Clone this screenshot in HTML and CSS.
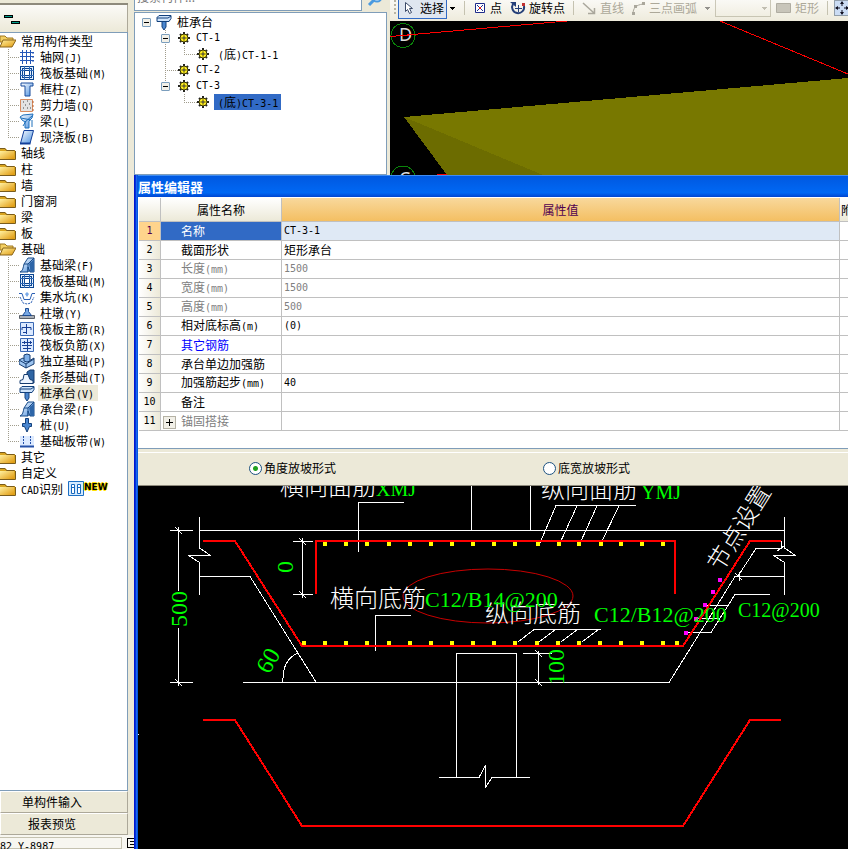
FILE: index.html
```html
<!DOCTYPE html>
<html lang="zh-CN">
<head>
    <meta charset="utf-8">
    <title>属性编辑器</title>
    <link rel="stylesheet" href="styles.css">
</head>
<body>
    <!-- shared icons -->
    <svg class="defs" aria-hidden="true">
        <defs>
            <linearGradient id="gold" x1="0" y1="0" x2="1" y2="1">
                <stop offset="0" stop-color="#fff0a0"/><stop offset="1" stop-color="#e0980c"/>
            </linearGradient>
            <linearGradient id="sky" x1="0" y1="0" x2="1" y2="1">
                <stop offset="0" stop-color="#fff"/><stop offset="1" stop-color="#4a90e0"/>
            </linearGradient>
            <symbol id="folder" viewBox="0 0 16 16">
                <path d="M0 3h5l2 2h8v9H0z" fill="#d9a520"/>
                <path d="M0 6h14v8H0z" fill="url(#gold)"/>
                <path d="M0 14.500h15.500V6M0 3.500h5l1.500 2h8" fill="none" stroke="#7a5c1c"/>
            </symbol>
            <symbol id="folder-open" viewBox="0 0 16 16">
                <path d="M0 3h5l2 2h6v4H0z" fill="#f3cf62" stroke="#a07820"/>
                <path d="M3 7h13l-4 7H0z" fill="url(#gold)" stroke="#8a651a"/>
            </symbol>
            <symbol id="raft" viewBox="0 0 16 16">
                <g shape-rendering="crispEdges">
                    <path d="M1.500 1.500h13v13h-13z" fill="#e4f0ff" stroke="#0b4590"/>
                    <path d="M3.500 3.500h9v9h-9z" fill="none" stroke="#0b4590"/>
                    <path d="M5.500 5.500h5v5h-5z" fill="#fff" stroke="#0b4590"/>
                    <path d="M5.500 1v5M10.500 1v5M5.500 10v5M10.500 10v5M1 5.500h5M1 10.500h5M10 5.500h5M10 10.500h5" stroke="#2f6ab8"/>
                </g>
            </symbol>
            <symbol id="beam" viewBox="0 0 16 16">
                <path d="M1 15c3-1 3-4 4-8l4-6h6v14h-4l-2-5v5z" fill="url(#sky)" stroke="#174a88"/>
                <path d="M5 7h4l6-6M9 7v8M12 5v10" fill="none" stroke="#174a88"/>
                <path d="M10 7l5-5v13h-3z" fill="#2d65a8"/>
            </symbol>
            <symbol id="cap" viewBox="0 0 16 16">
                <path d="M6 7h4v6l-2 3-2-3z" fill="#4a86cf" stroke="#12407c"/>
                <path d="M1 3.500l2-2h12v3l-2 3H1z" fill="#cfe4fb" stroke="#12407c"/>
                <path d="M1 4h11l3-2" fill="none" stroke="#12407c"/>
            </symbol>
            <symbol id="gear" viewBox="0 0 12 12">
                <path d="M6 0v12M0 6h12M2 2l8 8M10 2l-8 8" stroke="#222" stroke-width="2"/>
                <circle cx="6" cy="6" r="4" fill="#ffee20" stroke="#3a3608"/>
                <path d="M6 3v6M3 6h6" stroke="#8c8418"/>
                <circle cx="6" cy="6" r="1" fill="#fff" stroke="#3a3608"/>
            </symbol>
            <symbol id="rebar" viewBox="0 0 16 16">
                <path d="M1.500 1.500h13v13h-13z" fill="#dceaff" stroke="#3a68b4"/>
            </symbol>
        </defs>
    </svg>

    <aside class="sidebar">
        <div class="sidebar-edge"></div>
        <div class="sidebar-tools">
            <svg width="24" height="14" shape-rendering="crispEdges">
                <path d="M4 3h9v3H4zM11 9h9v3h-9z" fill="#000"/>
                <path d="M5 4h7v1H5zM12 10h7v1h-7z" fill="#00a08c"/>
            </svg>
        </div>
        <ul class="types">
            <li class="group"><svg class="icon"><use href="#folder-open"/></svg><span>常用构件类型</span>
                <ul>
                    <li class="leaf"><svg class="icon" viewBox="0 0 16 16"><path d="M3.500 1v14M7.500 1v14M11.500 1v14M1 3.500h14M1 7.500h14M1 11.500h14" stroke="#2457b8" fill="none"/><path d="M14 3v10" stroke="#2457b8" stroke-dasharray="2 2"/></svg><span>轴网<i>(J)</i></span></li>
                    <li class="leaf"><svg class="icon"><use href="#raft"/></svg><span>筏板基础<i>(M)</i></span></li>
                    <li class="leaf"><svg class="icon" viewBox="0 0 16 16"><path d="M2 2h12v3h-3v10H6V5H2z" fill="url(#sky)" stroke="#1b4c9c"/></svg><span>框柱<i>(Z)</i></span></li>
                    <li class="leaf"><svg class="icon" viewBox="0 0 16 16"><path d="M1.500 2.500h12v12h-12z" fill="#e3e3e3" stroke="#d88c60"/><path d="M4 5h1M8 4h1M6 8h1M10 7h1M4 11h1M8 11h1M11 11h1" stroke="#444"/><path d="M13 5h2M13 9h2M13 13h2" stroke="#b86030"/></svg><span>剪力墙<i>(Q)</i></span></li>
                    <li class="leaf"><svg class="icon" viewBox="0 0 16 16"><path d="M1 4l3-2 10-1-1 4-3 3v7H6V9L3 7z" fill="url(#sky)" stroke="#1e70bc"/><path d="M2 5l10 2M6 9l7-6M4 13l3-5M13 7v7" fill="none" stroke="#1e70bc"/></svg><span>梁<i>(L)</i></span></li>
                    <li class="leaf"><svg class="icon" viewBox="0 0 16 16"><path d="M5 1.500h9.500L11 14.500H1.500z" fill="url(#sky)" stroke="#123f9a"/><path d="M1 14.500h10.500" stroke="#123f9a" stroke-width="2"/></svg><span>现浇板<i>(B)</i></span></li>
                </ul>
            </li>
            <li class="group"><svg class="icon"><use href="#folder"/></svg><span>轴线</span></li>
            <li class="group"><svg class="icon"><use href="#folder"/></svg><span>柱</span></li>
            <li class="group"><svg class="icon"><use href="#folder"/></svg><span>墙</span></li>
            <li class="group"><svg class="icon"><use href="#folder"/></svg><span>门窗洞</span></li>
            <li class="group"><svg class="icon"><use href="#folder"/></svg><span>梁</span></li>
            <li class="group"><svg class="icon"><use href="#folder"/></svg><span>板</span></li>
            <li class="group"><svg class="icon"><use href="#folder-open"/></svg><span>基础</span>
                <ul>
                    <li class="leaf"><svg class="icon"><use href="#beam"/></svg><span>基础梁<i>(F)</i></span></li>
                    <li class="leaf"><svg class="icon"><use href="#raft"/></svg><span>筏板基础<i>(M)</i></span></li>
                    <li class="leaf"><svg class="icon" viewBox="0 0 16 16"><path d="M0 4.500h3l2 6h6l2-6h3" fill="none" stroke="#2a5fb4"/><path d="M1 8l3 6 4 1 4-1 3-6" fill="none" stroke="#2a5fb4" stroke-dasharray="2 1"/><path d="M6 5l2-2 2 2-2 3z" fill="#79a9e8"/></svg><span>集水坑<i>(K)</i></span></li>
                    <li class="leaf"><svg class="icon" viewBox="0 0 16 16"><path d="M.5 10.500h15v3H.5z" fill="#a9afb8" stroke="#5a6068"/><path d="M6.500 3.500h3v3l3 4h-9l3-4z" fill="#78a8e4" stroke="#1c4c94"/></svg><span>柱墩<i>(Y)</i></span></li>
                    <li class="leaf"><svg class="icon" viewBox="0 0 16 16"><use href="#rebar"/><path d="M7.500 3v10M3 9V6.500h9V9M4 11.500h4" fill="none" stroke="#173f94"/></svg><span>筏板主筋<i>(R)</i></span></li>
                    <li class="leaf"><svg class="icon" viewBox="0 0 16 16"><use href="#rebar"/><path d="M8.500 2v12M3 5.500h10M3 8.500h10M4 11.500h8M5.500 4v3M11.500 4v3" fill="none" stroke="#173f94"/></svg><span>筏板负筋<i>(X)</i></span></li>
                    <li class="leaf"><svg class="icon" viewBox="0 0 16 16"><path d="M0 7l4-2 6 3 5-3v6l-8 4-7-4z" fill="#9cc4f0" stroke="#163c70"/><path d="M5 2l3-1 3 1v6L8 9 5 8z" fill="#7fb0e8" stroke="#163c70"/><path d="M0 7l7 4 8-5M7 11v4" fill="none" stroke="#163c70"/></svg><span>独立基础<i>(P)</i></span></li>
                    <li class="leaf"><svg class="icon" viewBox="0 0 16 16"><path d="M8 6V3l3-2h4v13h-2z" fill="#2f65a4" stroke="#163c70"/><path d="M1 14.500v-3l3-1 1-5h4l2 5 3 1v3z" fill="#edf5ff" stroke="#163c70"/></svg><span>条形基础<i>(T)</i></span></li>
                    <li class="leaf current"><svg class="icon"><use href="#cap"/></svg><span>桩承台<i>(V)</i></span></li>
                    <li class="leaf"><svg class="icon"><use href="#beam"/></svg><span>承台梁<i>(F)</i></span></li>
                    <li class="leaf"><svg class="icon" viewBox="0 0 16 16"><path d="M6.500 1.500h3v5h3v3h-2L8 15 5.500 9.500h-2v-3h3z" fill="#4a86cf" stroke="#12407c"/></svg><span>桩<i>(U)</i></span></li>
                    <li class="leaf"><svg class="icon" viewBox="0 0 16 16"><path d="M1 3h14v10H1z" fill="#dceaff"/><path d="M1 13.500h14" stroke="#2450a8" stroke-width="2"/><path d="M4.500 3v9M11.500 3v9" stroke="#2450a8" stroke-dasharray="2 1"/></svg><span>基础板带<i>(W)</i></span></li>
                </ul>
            </li>
            <li class="group"><svg class="icon"><use href="#folder"/></svg><span>其它</span></li>
            <li class="group"><svg class="icon"><use href="#folder"/></svg><span>自定义</span></li>
            <li class="group"><svg class="icon"><use href="#folder"/></svg><span><i>CAD</i>识别</span>
                <svg class="icon cad" viewBox="0 0 16 16"><path d="M.5.5h15v14H.5z" fill="#d5ebff" stroke="#1d70c4"/><path d="M3.500 3.500h3v9h-3zM9.500 3.500h3v9h-3z" fill="#fff" stroke="#1768bd"/><path d="M4 6.500h2M10 6.500h2" stroke="#1768bd"/></svg><b class="new">NEW</b></li>
        </ul>
        <button class="side-button">单构件输入</button>
        <button class="side-button">报表预览</button>
        <div class="status"><span class="coords">82 Y-8987</span>
            <svg width="7" height="12" shape-rendering="crispEdges"><path d="M.5 1.500H7M.5 1v10M3 4.500h4M3 7.500h4M0 10.500h7" stroke="#000" fill="none"/></svg>
        </div>
    </aside>

    <main class="main">
        <div class="upper">
            <section class="members">
                <div class="search">
                    <input type="text" placeholder="搜索构件..." aria-label="搜索构件">
                    <button aria-label="搜索"><svg width="16" height="16" viewBox="0 0 16 16"><circle cx="10" cy="6" r="4.500" fill="#dff0ff" stroke="#4a9ae0" stroke-width="2"/><path d="M7 9l-5 5" stroke="#4a9ae0" stroke-width="3"/></svg></button>
                </div>
                <ul class="member-tree">
                    <li class="root"><button class="toggle" aria-label="折叠"></button><svg class="icon"><use href="#cap"/></svg><span>桩承台</span>
                        <ul>
                            <li class="member"><button class="toggle" aria-label="折叠"></button><svg class="gear"><use href="#gear"/></svg><span class="code">CT-1</span>
                                <ul><li class="unit"><svg class="gear"><use href="#gear"/></svg><span><i>(</i>底<i>)CT-1-1</i></span></li></ul>
                            </li>
                            <li class="member plain"><svg class="gear"><use href="#gear"/></svg><span class="code">CT-2</span></li>
                            <li class="member"><button class="toggle" aria-label="折叠"></button><svg class="gear"><use href="#gear"/></svg><span class="code">CT-3</span>
                                <ul><li class="unit selected"><svg class="gear"><use href="#gear"/></svg><span><i>(</i>底<i>)CT-3-1</i></span></li></ul>
                            </li>
                        </ul>
                    </li>
                </ul>
            </section>

            <section class="viewer">
                <div class="toolbar">
                    <span class="grip"></span>
                    <button class="tool pressed"><svg width="14" height="16" viewBox="0 0 14 16"><path d="M4.500 2.500v9l2-2 2 4 2-1-2-4h3z" fill="#fff" stroke="#3b4a68"/></svg>选择</button>
                    <button class="drop" aria-label="更多选择"></button>
                    <span class="sep"></span>
                    <button class="tool"><svg width="14" height="16" viewBox="0 0 14 16"><path d="M2.500 3.500h9v9h-9z" fill="#fff" stroke="#1e2c8c"/><path d="M4 5l6 6M10 5l-6 6" stroke="#1e2c8c"/><path d="M6 7h2v2H6z" fill="#e02020"/></svg>点</button>
                    <button class="tool rotate"><svg width="16" height="16" viewBox="0 0 16 16"><path d="M3 4a6 6 0 1 0 11 2" fill="none" stroke="#243f78" stroke-width="2"/><path d="M0 2h6v5z" fill="#243f78"/><path d="M8.500 5v7M5 8.500h7" stroke="#243f78"/><path d="M12 3h3v3h-3z" fill="#c03030"/></svg>旋转点</button>
                    <span class="sep"></span>
                    <button class="tool" disabled><svg width="15" height="16" viewBox="0 0 15 16"><path d="M1 3l11 10M6 13.500h6.500V8" fill="none" stroke="#aaa79c" stroke-width="1.500"/></svg>直线</button>
                    <button class="tool arc" disabled><svg width="15" height="16" viewBox="0 0 15 16"><path d="M2 14c0-6 3-9 10-10" fill="none" stroke="#aaa79c"/><path d="M1 12h3v3H1zM3 5h3v3H3zM11 2h3v3h-3z" fill="#aaa79c"/></svg>三点画弧</button>
                    <button class="drop" disabled aria-label="更多画弧"></button>
                    <select class="mode" disabled aria-label="画弧方式"><option></option></select>
                    <button class="tool rect" disabled><svg width="15" height="16" viewBox="0 0 15 16"><path d="M.5 3.500h14v9H.5z" fill="#c8c5ba" stroke="#b0ada2"/></svg>矩形</button>
                    <span class="sep"></span>
                    <button class="tool last" aria-label="平移"><svg width="16" height="16" viewBox="0 0 16 16"><path d="M.5.5h15v15H.5z" fill="#cbdcf4" stroke="#456" stroke-dasharray="1 1"/><path d="M8 2v4M8 10v4M2 8h4M10 8h4" stroke="#112"/><path d="M8 1l2 3H6zM8 15l2-3H6zM1 8l3-2v4zM15 8l-3-2v4z" fill="#112"/></svg></button>
                </div>
                <svg class="scene" viewBox="390 21 458 154" preserveAspectRatio="xMinYMin slice" shape-rendering="crispEdges">
                    <path d="M404 117l444-39v97H447z" fill="#787800"/>
                    <path d="M404 117l139 58h-96z" fill="#6c6c00"/>
                    <path d="M390 36.500L567 21M720 21l128 53M437 174.500h10" fill="none" stroke="#f00"/>
                    <g fill="none" stroke="#0a850a"><circle cx="403" cy="35.500" r="12"/><circle cx="403" cy="178" r="12"/></g>
                    <text x="399" y="41">D</text>
                    <text x="399" y="185">C</text>
                    <path d="M390 36.500l25-2" stroke="#f00"/>
                </svg>
            </section>
        </div>

        <section class="window">
            <h1>属性编辑器</h1>
            <div class="grid">
                <table>
                    <colgroup><col class="c-no"><col class="c-name"><col><col class="c-extra"></colgroup>
                    <thead>
                        <tr><th></th><th>属性名称</th><th class="active">属性值</th><th class="extra">附加</th></tr>
                    </thead>
                    <tbody>
                        <tr class="active"><th>1</th><td>名称</td><td class="code">CT-3-1</td><td></td></tr>
                        <tr><th>2</th><td>截面形状</td><td>矩形承台</td><td></td></tr>
                        <tr class="muted"><th>3</th><td>长度<i>(mm)</i></td><td class="code">1500</td><td></td></tr>
                        <tr class="muted"><th>4</th><td>宽度<i>(mm)</i></td><td class="code">1500</td><td></td></tr>
                        <tr class="muted"><th>5</th><td>高度<i>(mm)</i></td><td class="code">500</td><td></td></tr>
                        <tr><th>6</th><td>相对底标高<i>(m)</i></td><td class="code">(0)</td><td></td></tr>
                        <tr class="linked"><th>7</th><td>其它钢筋</td><td></td><td></td></tr>
                        <tr><th>8</th><td>承台单边加强筋</td><td></td><td></td></tr>
                        <tr><th>9</th><td>加强筋起步<i>(mm)</i></td><td class="code">40</td><td></td></tr>
                        <tr><th>10</th><td>备注</td><td></td><td></td></tr>
                        <tr class="muted folded"><th>11</th><td><button class="plus" aria-label="展开"></button>锚固搭接</td><td></td><td></td></tr>
                    </tbody>
                </table>
            </div>
            <div class="slope">
                <label><input type="radio" name="slope" checked>角度放坡形式</label>
                <label><input type="radio" name="slope">底宽放坡形式</label>
            </div>
            <svg class="drawing" viewBox="138 486 710 363" preserveAspectRatio="xMinYMin slice">
                <g class="line">
                    <!-- overall height -->
                    <path d="M170 530.500h23M170 682.500h23M178.500 527v64M178.500 628v58M175 527l7 7M175 679l7 7"/>
                    <!-- slab and left break line -->
                    <path d="M199.500 517v31l11 7.500h-22l11 7v32M199.500 530.500h585M199.500 576.500H250L316 682"/>
                    <path d="M243 682.500h426L735 576.500h49.500M784.500 517v31l11 7.500h-22l11 7v32"/>
                    <path d="M471.500 486v44M530.500 486v44"/>
                    <!-- hook length -->
                    <path d="M293 541.500h20M293 594.500h20M302.500 538v60M299 538l7 7M299 591l7 7"/>
                    <!-- leaders -->
                    <path d="M404 502.500h-45.500V552M411 615.500h-35.500V651"/>
                    <path d="M636 505.500h-80L540 543M577 506l-17 37M597 506l-16 35M619 506l-18 37"/>
                    <path d="M601 629.500h-67L518 642M555 630l-16 12M577 630l-16 12M598 630l-16 12"/>
                    <path d="M781.500 541v7.500H756L738 576M735 573l7 7M739.500 572v9M784 546l-7 5"/>
                    <path d="M770 594.500h-35L711 632.500h-23M706 605.500h23M696 618.500h23"/>
                    <!-- pile -->
                    <path d="M456.500 777V653.500h60V777M439 777.500h40l6.500-12v22l6.500-10h38"/>
                    <path d="M523 653.500h29M538.500 651v34M535 650l7 7M535 679l7 7"/>
                    <path d="M298 653q-16 7-15 29M138 734.500h1"/>
                </g>
                <g class="steel">
                    <path d="M203 541h32L302 646h381L750 541h31"/>
                    <path d="M316 594v-53h359v53"/>
                    <path d="M203 720h32L302 826h381L750 720h31"/>
                </g>
                <ellipse cx="488" cy="596" rx="85" ry="27" fill="none" stroke="#c80000"/>
                <!-- bars: zero-length dashes with round caps -->
                <path class="bars" d="M325 544h0M346 544h0M367 544h0M389 544h0M410 544h0M431 544h0M452 544h0M473 544h0M494 544h0M515 544h0M538 544h0M559 544h0M579 544h0M601 544h0M621 544h0M642 544h0M663 544h0"/>
                <path class="bars" d="M304 643h0M325 643h0M346 643h0M367 643h0M389 643h0M410 643h0M431 643h0M452 643h0M473 643h0M494 643h0M515 643h0M537 643h0M558 643h0M579 643h0M600 643h0M621 643h0M642 643h0M663 643h0M677 643h0"/>
                <path class="bars side" d="M720 580h0M713 592h0M705 605h0M696 619h0M686 633h0"/>
                <g class="label">
                    <text x="280" y="495">横向面筋</text>
                    <text x="541" y="498">纵向面筋</text>
                    <text x="330" y="607">横向底筋</text>
                    <text x="485" y="622">纵向底筋</text>
                    <text transform="translate(721 573) rotate(-58)">节点设置</text>
                </g>
                <g class="spec">
                    <text class="short" x="376" y="496">XMJ</text>
                    <text class="short" x="641" y="499">YMJ</text>
                    <text x="425" y="607">C12/B14@200</text>
                    <text x="594" y="622">C12/B12@200</text>
                    <text class="short" x="738" y="617">C12@200</text>
                </g>
                <g class="dim">
                    <text transform="translate(187 627) rotate(-90)">500</text>
                    <text transform="translate(293 573) rotate(-90)">0</text>
                    <text transform="translate(564 685) rotate(-90)">100</text>
                    <text transform="translate(269 675) rotate(-60)">60</text>
                </g>
            </svg>
        </section>
    </main>
</body>
</html>
```
FILE: styles.css
```css
* {
    box-sizing: border-box;
}
body {
    margin: 0;
    height: 100vh;
    display: flex;
    overflow: hidden;
    background: #ece9d8;
    color: #000;
    font: 12px/16px "Noto Sans CJK SC", sans-serif;
}
ul {
    list-style: none;
    margin: 0;
    padding: 0;
}
button, input, select {
    font: inherit;
    color: inherit;
    margin: 0;
    padding: 0;
}
/* half-width characters */
i, .code {
    font: 10px/16px "DejaVu Sans Mono", monospace;
}
.defs {
    position: absolute;
    width: 0;
    height: 0;
}
.icon {
    width: 16px;
    height: 16px;
    flex: none;
}
.gear {
    width: 12px;
    height: 12px;
    flex: none;
}

/* component types */
.sidebar {
    width: 134px;
    flex: none;
    display: flex;
    flex-direction: column;
}
.sidebar-edge {
    height: 5px;
    margin-right: 6px;
    border-bottom: 2px solid #8e8a7c;
}
.sidebar-tools {
    height: 27px;
    margin-right: 6px;
    padding-top: 7px;
    border-right: 1px solid #aca899;
    background: linear-gradient(#fbfaf7, #ece9d8);
}
.sidebar-tools svg {
    display: block;
}
.types {
    flex: 1;
    min-height: 0;
    overflow: hidden;
    margin-right: 6px;
    border: 1px solid #7f9db9;
    border-left: 0;
    background: #fff;
}
.group, .leaf {
    display: flex;
    flex-wrap: wrap;
    white-space: nowrap;
}
.group > ul {
    width: 100%;
}
.group > span {
    height: 16px;
    margin-left: 5px;
}
.group > .cad {
    margin-left: 5px;
}
.leaf::before {
    content: "";
    width: 11px;
    height: 16px;
    margin-left: 8px;
    background:
        repeating-linear-gradient(90deg, #a09c8c 0 1px, transparent 1px 2px) 0 8px / 100% 1px no-repeat,
        repeating-linear-gradient(#a09c8c 0 1px, transparent 1px 2px) 0 0 / 1px 100% no-repeat;
}
.leaf:last-child::before {
    background-size: 100% 1px, 1px 8px;
}
.leaf > span {
    height: 16px;
    margin-left: 3px;
    padding: 0 4px 0 2px;
}
.leaf.current > span {
    background: #ece9d8;
}
.new {
    font: bold 9px/12px "DejaVu Sans", sans-serif;
    text-shadow: 1px 0 #ffe000, -1px 0 #ffe000, 0 1px #ffe000, 0 -1px #ffe000;
}
.side-button {
    height: 22px;
    margin-right: 6px;
    padding-right: 24px;
    border: 1px solid;
    border-color: #fff #aca899 #aca899 #fff;
    background: #ece9d8;
}
.status {
    height: 14px;
    display: flex;
    gap: 5px;
    padding-top: 2px;
    overflow: hidden;
    background: #f7f6f0;
}
.coords {
    width: 122px;
    flex: none;
    border: 1px solid #c5c2b0;
    border-left: 0;
    font: 10px/18px "DejaVu Sans Mono", monospace;
}

/* upper area */
.main {
    flex: 1;
    min-width: 0;
    display: flex;
    flex-direction: column;
}
.upper {
    height: 175px;
    flex: none;
    display: flex;
}
.members {
    width: 253px;
    flex: none;
    display: flex;
    flex-direction: column;
}
.search {
    height: 12px;
    display: flex;
    align-items: flex-end;
    overflow: hidden;
    padding-bottom: 1px;
}
.search input {
    flex: 1;
    min-width: 0;
    height: 22px;
    padding: 0 2px 8px;
    border: 1px solid #7f9db9;
    background: #fff;
}
.search input::placeholder {
    color: #777;
}
.search button {
    width: 25px;
    height: 22px;
    border: 0;
    background: #ece9d8;
}
.member-tree {
    flex: 1;
    padding-top: 1px;
    border: 1px solid #7f9db9;
    background: #fff;
}
.root, .member, .unit {
    display: flex;
    flex-wrap: wrap;
    align-items: center;
    white-space: nowrap;
}
.root ul {
    width: 100%;
}
.root > .toggle {
    margin: 0 5px 0 7px;
}
.root > span {
    margin-left: 5px;
}
.root > ul {
    background: repeating-linear-gradient(#a09c8c 0 1px, transparent 1px 2px) 30px 0 / 1px calc(100% - 24px) no-repeat;
}
.toggle {
    width: 9px;
    height: 9px;
    border: 1px solid #7b9ebd;
    border-radius: 1px;
    background: linear-gradient(#000, #000) center / 5px 1px no-repeat, #f2f0e8;
}
.member > .toggle {
    margin: 0 8px 0 26px;
}
.member > span {
    margin-left: 6px;
}
.plain::before, .unit::before {
    content: "";
    width: 13px;
    height: 1px;
    margin-left: 30px;
    background: repeating-linear-gradient(90deg, #a09c8c 0 1px, transparent 1px 2px);
}
.member > ul {
    background: repeating-linear-gradient(#a09c8c 0 1px, transparent 1px 2px) 49px 0 / 1px 8px no-repeat;
}
.unit::before {
    margin-left: 49px;
}
.unit > span {
    height: 16px;
    margin-left: 5px;
    padding: 0 3px 0 4px;
}
.unit.selected > span {
    background: #316ac5;
}
.viewer {
    flex: 1;
    min-width: 0;
    margin-left: 3px;
    display: flex;
    flex-direction: column;
}
.toolbar {
    height: 21px;
    flex: none;
    display: flex;
    align-items: center;
    overflow: hidden;
    padding: 0 0 5px 4px;
    background: linear-gradient(#faf9f5, #eeebdc);
}
.toolbar > * {
    flex: none;
}
.grip {
    width: 2px;
    height: 16px;
    background: repeating-linear-gradient(#b8b4a4 0 2px, transparent 2px 4px);
}
.tool {
    display: flex;
    align-items: center;
    gap: 3px;
    height: 20px;
    padding: 0 2px;
    border: 0;
    background: none;
}
.tool.pressed {
    gap: 5px;
    height: 22px;
    margin-left: 2px;
    border: 1px solid #316ac5;
    background: #dfe6f0;
}
.drop {
    width: 11px;
    height: 16px;
    border: 0;
    background: linear-gradient(#000, #000) center 7px / 5px 1px no-repeat,
        linear-gradient(#000, #000) center 8px / 3px 1px no-repeat,
        linear-gradient(#000, #000) center 9px / 1px 1px no-repeat;
}
.tool.rotate {
    margin-left: 4px;
}
.tool.arc {
    margin-left: 3px;
}
.tool.rect {
    gap: 4px;
    margin-left: 3px;
}
.tool.last {
    padding: 0;
}
.tool:disabled {
    color: #aca899;
}
.drop:disabled {
    width: 16px;
    opacity: .4;
}
.sep {
    width: 1px;
    height: 14px;
    margin: 0 6px;
    background: #c5c2b0;
}
.mode {
    width: 56px;
    height: 18px;
    appearance: none;
    border: 1px solid #b8b4a0;
    border-radius: 0;
    background: linear-gradient(#aca899, #aca899) 46px 7px / 5px 1px no-repeat,
        linear-gradient(#aca899, #aca899) 47px 8px / 3px 1px no-repeat,
        linear-gradient(#aca899, #aca899) 48px 9px / 1px 1px no-repeat;
}
.scene {
    flex: 1;
    min-height: 0;
    width: 100%;
    display: block;
    background: #000;
}
.scene text {
    font: 18px "Noto Sans", sans-serif;
    fill: #ddd;
}

/* property window */
.window {
    flex: 1;
    min-height: 0;
    display: flex;
    flex-direction: column;
    padding-left: 4px;
    background: linear-gradient(90deg, #0019cf 0 1px, #0831d9 1px 2px, #166aee 2px 3px, #0855dd 3px 4px, #ece9d8 4px);
}
h1 {
    flex: none;
    height: 22px;
    margin: 0;
    border-top: 1px solid #3f8cf3;
    background: linear-gradient(#0058e0, #0068f4 80%, #0045d0);
    color: #fff;
    font: bold 13px/22px "Noto Sans CJK SC", sans-serif;
}
.grid {
    flex: none;
    padding: 1px 0 17px 1px;
    border-bottom: 1px solid #7f9db9;
    background: #fff;
}
table {
    width: 100%;
    table-layout: fixed;
    border-collapse: separate;
    border-spacing: 0;
}
.c-no {
    width: 22px;
}
.c-name {
    width: 121px;
}
.c-extra {
    width: 8px;
}
th, td {
    height: 19px;
    padding: 0;
    overflow: hidden;
    white-space: nowrap;
    text-align: left;
    border: solid #c0c0c0;
    border-width: 0 1px 1px 0;
}
th:last-child, td:last-child {
    border-right: 0;
}
td {
    padding-left: 2px;
}
thead th {
    height: 24px;
    font-weight: normal;
    text-align: center;
    background: linear-gradient(#fff, #ece9d8);
}
thead .active {
    background: linear-gradient(#f8d89c, #f4bf62);
    color: #500050;
}
thead .extra {
    padding-left: 1px;
    text-align: left;
}
tbody th {
    font: 10px/16px "DejaVu Sans Mono", monospace;
    text-align: center;
    background: linear-gradient(90deg, #fff, #ece9d8);
}
th + td {
    padding-left: 20px;
}
tr.active th {
    background: #ffd48c;
    color: #500050;
}
tr.active td {
    background: #dfe9f5;
}
tr.active th + td {
    background: #316ac5;
    color: #fff;
}
tr.active td:last-child {
    background: #fff;
}
.muted td {
    color: #808080;
}
.linked td {
    color: #00f;
}
.folded th + td {
    padding-left: 2px;
}
.plus {
    width: 13px;
    height: 13px;
    margin-right: 5px;
    vertical-align: middle;
    border: 1px solid #b5b2a5;
    background: linear-gradient(#000, #000) center / 7px 1px no-repeat,
        linear-gradient(#000, #000) center / 1px 7px no-repeat, #f2f0e8;
}
.slope {
    flex: none;
    display: flex;
    gap: 207px;
    height: 34px;
    margin-top: 3px;
    padding: 7px 0 0 111px;
    border-top: 1px solid #fff;
    border-bottom: 1px solid #8e8a7c;
}
.slope label {
    display: flex;
    align-items: center;
    gap: 2px;
    height: 16px;
}
.slope input {
    width: 13px;
    height: 13px;
    appearance: none;
    border: 1px solid #1d5281;
    border-radius: 50%;
    background: #fff;
}
.slope input:checked {
    background: radial-gradient(circle, #21a121 0 2px, #fff 3px);
}
.drawing {
    flex: 1;
    min-height: 0;
    width: 100%;
    display: block;
    background: #000;
}
.line, .steel, .bars {
    fill: none;
    shape-rendering: crispEdges;
}
.line {
    stroke: #fff;
}
.steel {
    stroke: #f00;
    stroke-width: 2;
}
.bars {
    stroke: #ff0;
    stroke-width: 5;
    stroke-linecap: round;
}
.bars.side {
    stroke: #f0f;
}
.label {
    font: 24px "Noto Sans CJK SC", sans-serif;
    font-weight: 300;
    fill: #fff;
}
.spec {
    font: 22px "Liberation Serif", serif;
    fill: #0f0;
}
.spec .short {
    font-size: 20px;
}
.dim {
    font: 24px "Liberation Serif", serif;
    fill: #0f0;
}
```
